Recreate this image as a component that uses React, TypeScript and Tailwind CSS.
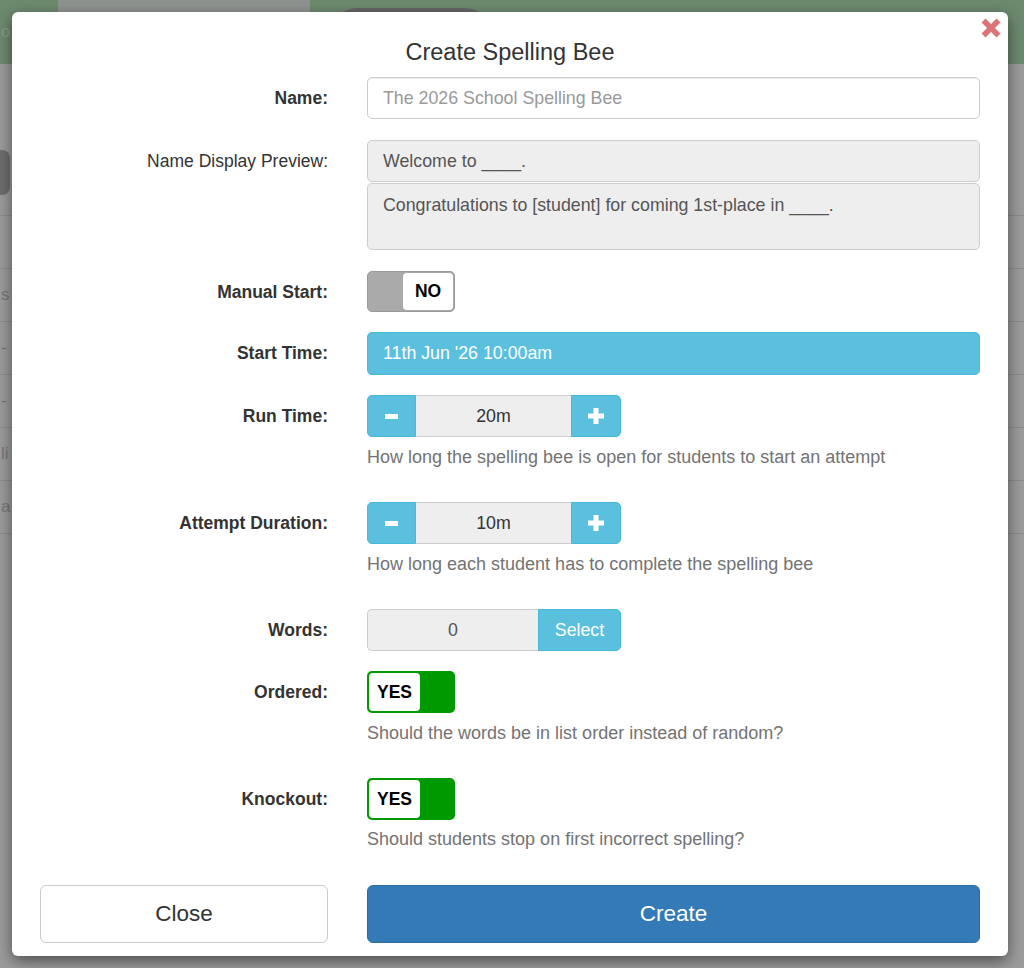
import type { ReactNode } from "react";

function Label({ children, bold = true }: { children: ReactNode; bold?: boolean }) {
  return (
    <div
      className={`flex h-[42px] items-center justify-end text-[17.5px] text-[#333] ${
        bold ? "font-bold" : "font-normal"
      }`}
    >
      {children}
    </div>
  );
}

function Row({ label, bold = true, className = "", children }: { label: string; bold?: boolean; className?: string; children: ReactNode }) {
  return (
    <div className={`grid grid-cols-[288px_613px] gap-x-[39px] ${className}`}>
      <Label bold={bold}>{label}</Label>
      <div>{children}</div>
    </div>
  );
}

function Help({ children, className = "mt-[8px]" }: { children: ReactNode; className?: string }) {
  return <p className={`${className} h-[24px] text-[18px] leading-[24px] text-[#737373]`}>{children}</p>;
}

function Toggle({ on }: { on: boolean }) {
  if (on) {
    return (
      <div className="flex h-[42px] w-[88px] rounded-[5px] bg-[#009a00] p-[2px]">
        <div className="flex w-[51px] items-center justify-center rounded-[4px] bg-white text-[17.5px] font-bold text-black">
          YES
        </div>
      </div>
    );
  }
  return (
    <div className="flex h-[41px] w-[88px] justify-end rounded-[5px] border border-[#999] bg-[#aaaaaa] p-[1px]">
      <div className="flex w-[50px] items-center justify-center rounded-[4px] bg-white text-[17.5px] font-bold text-black">
        NO
      </div>
    </div>
  );
}

function Stepper({ value }: { value: string }) {
  return (
    <div className="flex h-[42px] w-[254px]">
      <button className="flex w-[49px] items-center justify-center rounded-l-[5px] border border-[#46b8da] bg-[#5bc0de]">
        <span className="block h-[5px] w-[13px] bg-white" />
      </button>
      <div className="flex flex-1 items-center justify-center border-y border-[#ccc] bg-[#eeeeee] text-[17.8px] text-[#333]">
        {value}
      </div>
      <button className="flex w-[50px] items-center justify-center rounded-r-[5px] border border-[#46b8da] bg-[#5bc0de]">
        <svg width="16" height="16" viewBox="0 0 16 16">
          <rect x="5.5" y="0" width="5" height="16" fill="#fff" />
          <rect x="0" y="5.5" width="16" height="5" fill="#fff" />
        </svg>
      </button>
    </div>
  );
}

export default function App() {
  const rows = ["", "s", "-", "-", "li", "a"];

  return (
    <div className="relative h-[968px] w-full overflow-hidden bg-[#9c9c9c] font-['Liberation_Sans',Arial,sans-serif]">
      {/* page behind the overlay */}
      <div className="relative h-[64px] bg-[#6d8a6f]">
        <div className="absolute left-[58px] top-0 h-[40px] w-[252px] bg-[#8f938f]" />
        <div className="absolute left-[336px] top-[8px] h-[40px] w-[150px] rounded-full bg-[#666]" />
        <span className="absolute left-[1px] top-[22px] text-[16px] leading-[20px] text-[#8aa08b]">o</span>
      </div>
      <div className="h-[151px] pt-[86px]">
        <div className="ml-[-14px] h-[45px] w-[24px] rounded-[8px] bg-[#6e6e6e]" />
      </div>
      {rows.map((t, i) => (
        <div key={i} className="flex h-[53px] items-center border-t border-[#8c8c8c] pl-[1px] text-[17px] text-[#777]">
          <span>{t}</span>
        </div>
      ))}
      <div className="border-t border-[#8c8c8c]" />

      {/* modal */}
      <div className="absolute left-[12px] top-[12px] h-[944px] w-[996px] rounded-[6px] bg-white px-[28px] pt-[25px] text-[#333] shadow-[0_5px_15px_rgba(0,0,0,0.5)]">
        <button className="absolute right-[7px] top-[6px]" aria-label="close">
          <svg width="20" height="20" viewBox="0 0 20 20">
            <line x1="2.5" y1="2.5" x2="17.5" y2="17.5" stroke="#db7477" strokeWidth="5.5" />
            <line x1="17.5" y1="2.5" x2="2.5" y2="17.5" stroke="#db7477" strokeWidth="5.5" />
          </svg>
        </button>

        <h4 className="h-[30px] text-center text-[23.5px] leading-[30px] text-[#333]">Create Spelling Bee</h4>

        <Row label="Name:" className="mt-[10px]">
          <input
            placeholder="The 2026 School Spelling Bee"
            className="h-[42px] w-full rounded-[5px] border border-[#ccc] px-[15px] text-[17.8px] text-[#555] shadow-[inset_0_1px_1px_rgba(0,0,0,0.075)] outline-none placeholder:text-[#999]"
          />
        </Row>

        <Row label="Name Display Preview:" bold={false} className="mt-[21px]">
          <div className="flex h-[42px] items-center rounded-[5px] border border-[#ccc] bg-[#eeeeee] px-[15px] text-[17.8px] text-[#555]">
            Welcome to ____.
          </div>
          <div className="mt-px h-[67px] rounded-[5px] border border-[#ccc] bg-[#eeeeee] px-[15px] pt-[9px] text-[17.8px] leading-[24px] text-[#555]">
            Congratulations to [student] for coming 1st-place in ____.
          </div>
        </Row>

        <Row label="Manual Start:" className="mt-[21px]">
          <Toggle on={false} />
        </Row>

        <Row label="Start Time:" className="mt-[19px]">
          <div className="flex h-[43px] items-center rounded-[5px] border border-[#46b8da] bg-[#5bc0de] px-[15px] text-[17.8px] text-white">
            11th Jun '26 10:00am
          </div>
        </Row>

        <Row label="Run Time:" className="mt-[20px]">
          <Stepper value="20m" />
          <Help>How long the spelling bee is open for students to start an attempt</Help>
        </Row>

        <Row label="Attempt Duration:" className="mt-[33px]">
          <Stepper value="10m" />
          <Help>How long each student has to complete the spelling bee</Help>
        </Row>

        <Row label="Words:" className="mt-[33px]">
          <div className="flex h-[42px] w-[254px]">
            <div className="flex w-[171px] items-center justify-center rounded-l-[5px] border border-r-0 border-[#ccc] bg-[#eeeeee] text-[17.8px] text-[#555]">
              0
            </div>
            <button className="flex flex-1 items-center justify-center rounded-r-[5px] border border-[#46b8da] bg-[#5bc0de] text-[17.8px] text-white">
              Select
            </button>
          </div>
        </Row>

        <Row label="Ordered:" className="mt-[20px]">
          <Toggle on />
          <Help>Should the words be in list order instead of random?</Help>
        </Row>

        <Row label="Knockout:" className="mt-[33px]">
          <Toggle on />
          <Help className="mt-[7px]">Should students stop on first incorrect spelling?</Help>
        </Row>

        <div className="mt-[34px] grid grid-cols-[288px_613px] gap-x-[39px]">
          <button className="h-[58px] rounded-[6px] border border-[#ccc] bg-white text-[22.5px] text-[#333]">Close</button>
          <button className="h-[58px] rounded-[6px] border border-[#2e6da4] bg-[#337ab7] text-[22.5px] text-white">Create</button>
        </div>
      </div>
    </div>
  );
}
